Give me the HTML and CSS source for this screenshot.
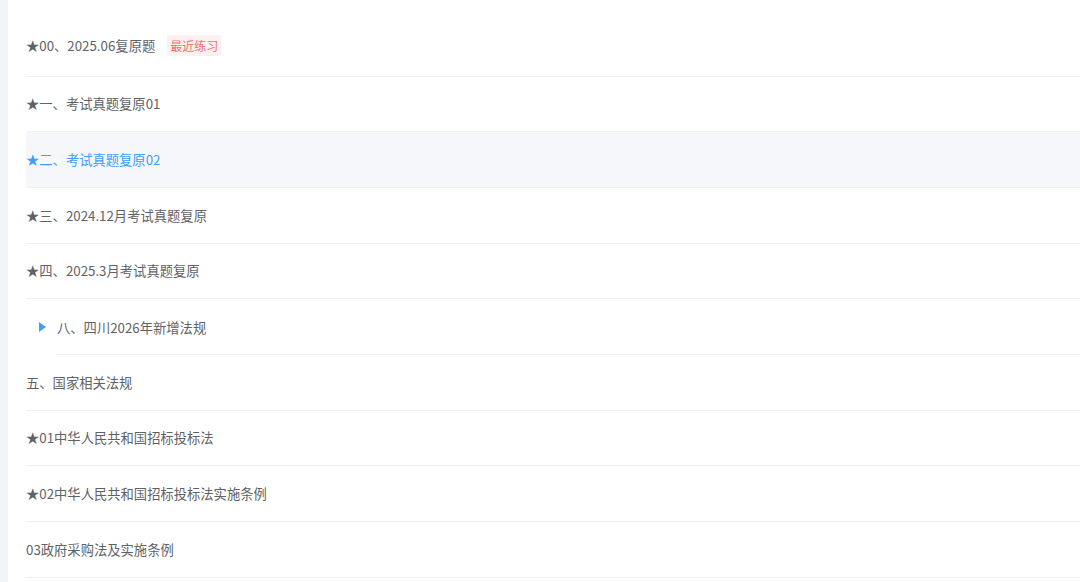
FILE: index.html
```html
<!DOCTYPE html>
<html lang="zh">
<head>
<meta charset="utf-8">
<link rel="stylesheet" href="styles.css">
</head>
<body>
<div class="page">
  <div class="side"></div>
  <div class="main">
    <ul class="list">
      <li class="row first"><span class="label">★00、2025.06复原题</span><span class="tag">最近练习</span></li>
      <li class="row"><span class="label">★一、考试真题复原01</span></li>
      <li class="row active"><span class="label">★二、考试真题复原02</span></li>
      <li class="row"><span class="label">★三、2024.12月考试真题复原</span></li>
      <li class="row"><span class="label">★四、2025.3月考试真题复原</span></li>
      <li class="row sub"><span class="caret"></span><span class="label">八、四川2026年新增法规</span></li>
      <li class="row"><span class="label">五、国家相关法规</span></li>
      <li class="row"><span class="label">★01中华人民共和国招标投标法</span></li>
      <li class="row"><span class="label">★02中华人民共和国招标投标法实施条例</span></li>
      <li class="row"><span class="label">03政府采购法及实施条例</span></li>
    </ul>
  </div>
</div>
</body>
</html>
```
FILE: styles.css
```css
html, body {
  margin: 0;
  padding: 0;
  background: #ffffff;
  height: 100%;
  overflow: hidden;
}
.page {
  display: flex;
  height: 582px;
  font-family: "Noto Sans CJK SC", "Noto Sans", sans-serif;
  font-size: 13.3px;
  color: #606266;
}
.side {
  width: 8px;
  flex: none;
  background: #f3f4f6;
}
.main {
  flex: 1;
  padding: 21px 0 0 18px;
}
.list {
  list-style: none;
  margin: 0;
  padding: 0;
}
.row {
  box-sizing: border-box;
  display: flex;
  align-items: center;
  height: 55.67px;
  border-bottom: 1px solid #eff0f2;
}
.row.first {
  padding-bottom: 5px;
}
.row.active {
  background: #f5f7fa;
  color: #409eff;
}
.row.sub {
  padding-left: 13px;
  border-bottom: none;
  position: relative;
}
.row.sub::after {
  content: "";
  position: absolute;
  left: 30px;
  right: 0;
  bottom: 0;
  height: 1px;
  background: #eff0f2;
}
.caret {
  width: 0;
  height: 0;
  border-top: 5.5px solid transparent;
  border-bottom: 5.5px solid transparent;
  border-left: 7px solid #409eff;
  margin-right: 11px;
}
.tag {
  margin-left: 12px;
  height: 21px;
  line-height: 21px;
  padding: 0 3px;
  font-size: 12px;
  color: #f56c6c;
  background: #fef0f0;
  border-radius: 2px;
}
```
